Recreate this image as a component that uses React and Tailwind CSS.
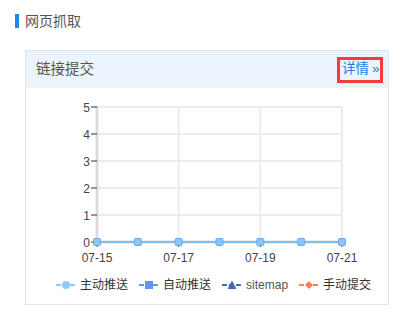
import React from "react";

const days = [0, 1, 2, 3, 4, 5, 6];
const x0 = 71;
const x1 = 316;
const yTop = 19;
const yBase = 154;
const step = (yBase - yTop) / 5;
const px = (i) => x0 + ((x1 - x0) / 6) * i;

function Chart() {
  return (
    <svg width="362" height="182" className="block" style={{ fontFamily: '"Liberation Sans", Arial, sans-serif' }}>
      {/* horizontal grid */}
      {[5, 4, 3, 2, 1].map((v) => (
        <line key={v} x1={x0} x2={x1} y1={yBase - v * step} y2={yBase - v * step} stroke="#ececec" strokeWidth="2" />
      ))}
      {/* vertical grid */}
      {[2, 4, 6].map((i) => (
        <line key={i} x1={px(i)} x2={px(i)} y1={yTop} y2={yBase} stroke="#ececec" strokeWidth="2" />
      ))}
      {/* axes */}
      <line x1={x0} x2={x0} y1={yTop - 1} y2={yBase} stroke="#dcdcdc" strokeWidth="3" />
      <line x1={x0} x2={x1} y1={yBase} y2={yBase} stroke="#dcdcdc" strokeWidth="3" />
      {/* y ticks and labels */}
      {[0, 1, 2, 3, 4, 5].map((v) => (
        <g key={v}>
          <line x1={x0 - 6} x2={x0} y1={yBase - v * step} y2={yBase - v * step} stroke="#333" strokeWidth="1" />
          <text x={x0 - 7} y={yBase - v * step + 4.5} textAnchor="end" fontSize="12" fill="#444">{v}</text>
        </g>
      ))}
      {/* x ticks and labels */}
      {[0, 2, 4, 6].map((i) => (
        <g key={i}>
          <line x1={px(i)} x2={px(i)} y1={yBase} y2={yBase + 5} stroke="#333" strokeWidth="1" />
          <text x={px(i)} y={yBase + 20} textAnchor="middle" fontSize="12" fill="#444">{`07-${15 + i}`}</text>
        </g>
      ))}
      {/* data line */}
      <line x1={x0} x2={x1} y1={yBase} y2={yBase} stroke="#7cc1f3" strokeWidth="2" />
      {days.map((i) => (
        <rect key={i} x={px(i) - 3.5} y={yBase - 3.5} width="7" height="7" rx="1" fill="#88c8f8" stroke="#6aa9ea" strokeWidth="1" />
      ))}
    </svg>
  );
}

function Marker({ color, shape }) {
  return (
    <svg width="20" height="10" className="block">
      <line x1="0" x2="20" y1="5" y2="5" stroke={color} strokeWidth="2" strokeDasharray="5 2" />
      {shape === "circle" && <circle cx="10" cy="5" r="4" fill={color} />}
      {shape === "square" && <rect x="6" y="1" width="8" height="8" fill={color} />}
      {shape === "triangle" && <polygon points="10,0.5 14.5,9 5.5,9" fill={color} />}
      {shape === "diamond" && <polygon points="10,1 14,5 10,9 6,5" fill={color} />}
    </svg>
  );
}

const legend = [
  { label: "主动推送", color: "#87cefa", shape: "circle" },
  { label: "自动推送", color: "#6495ed", shape: "square" },
  { label: "sitemap", color: "#4a67b3", shape: "triangle" },
  { label: "手动提交", color: "#ff7f50", shape: "diamond" },
];

export default function App() {
  return (
    <div className="w-[410px] h-[316px] bg-white" style={{ fontFamily: '"Liberation Sans", "Noto Sans CJK SC", sans-serif' }}>
      <div className="flex items-center pl-[15px] pt-[9px] h-[23px] box-content">
        <div className="w-[4px] h-[14px] bg-[#1e88e5]"></div>
        <span className="ml-[6px] text-[14px] text-[#555] leading-none">网页抓取</span>
      </div>
      <div className="ml-[25px] mt-[18px] w-[364px] h-[255px] border border-[#e3e3e3] flex flex-col">
        <div className="h-[37px] bg-[#ebf4fc] flex items-center justify-between pl-[10px] pr-[5px]">
          <span className="text-[14.5px] text-[#555]">链接提交</span>
          <a className="border-[3px] border-[#f23c3c] h-[26px] w-[46px] pl-[2px] flex items-center text-[13.5px] text-[#1a82e0]">详情<span className="ml-[3px]">»</span></a>
        </div>
        <Chart />
        <div className="flex items-center pl-[30px] mt-[6px] text-[12px] text-[#333]">
          {legend.map((l) => (
            <div key={l.label} className="flex items-center gap-[4px] mr-[11px]">
              <Marker color={l.color} shape={l.shape} />
              <span className={l.shape === "triangle" ? "text-[#555]" : ""}>{l.label}</span>
            </div>
          ))}
        </div>
      </div>
    </div>
  );
}
